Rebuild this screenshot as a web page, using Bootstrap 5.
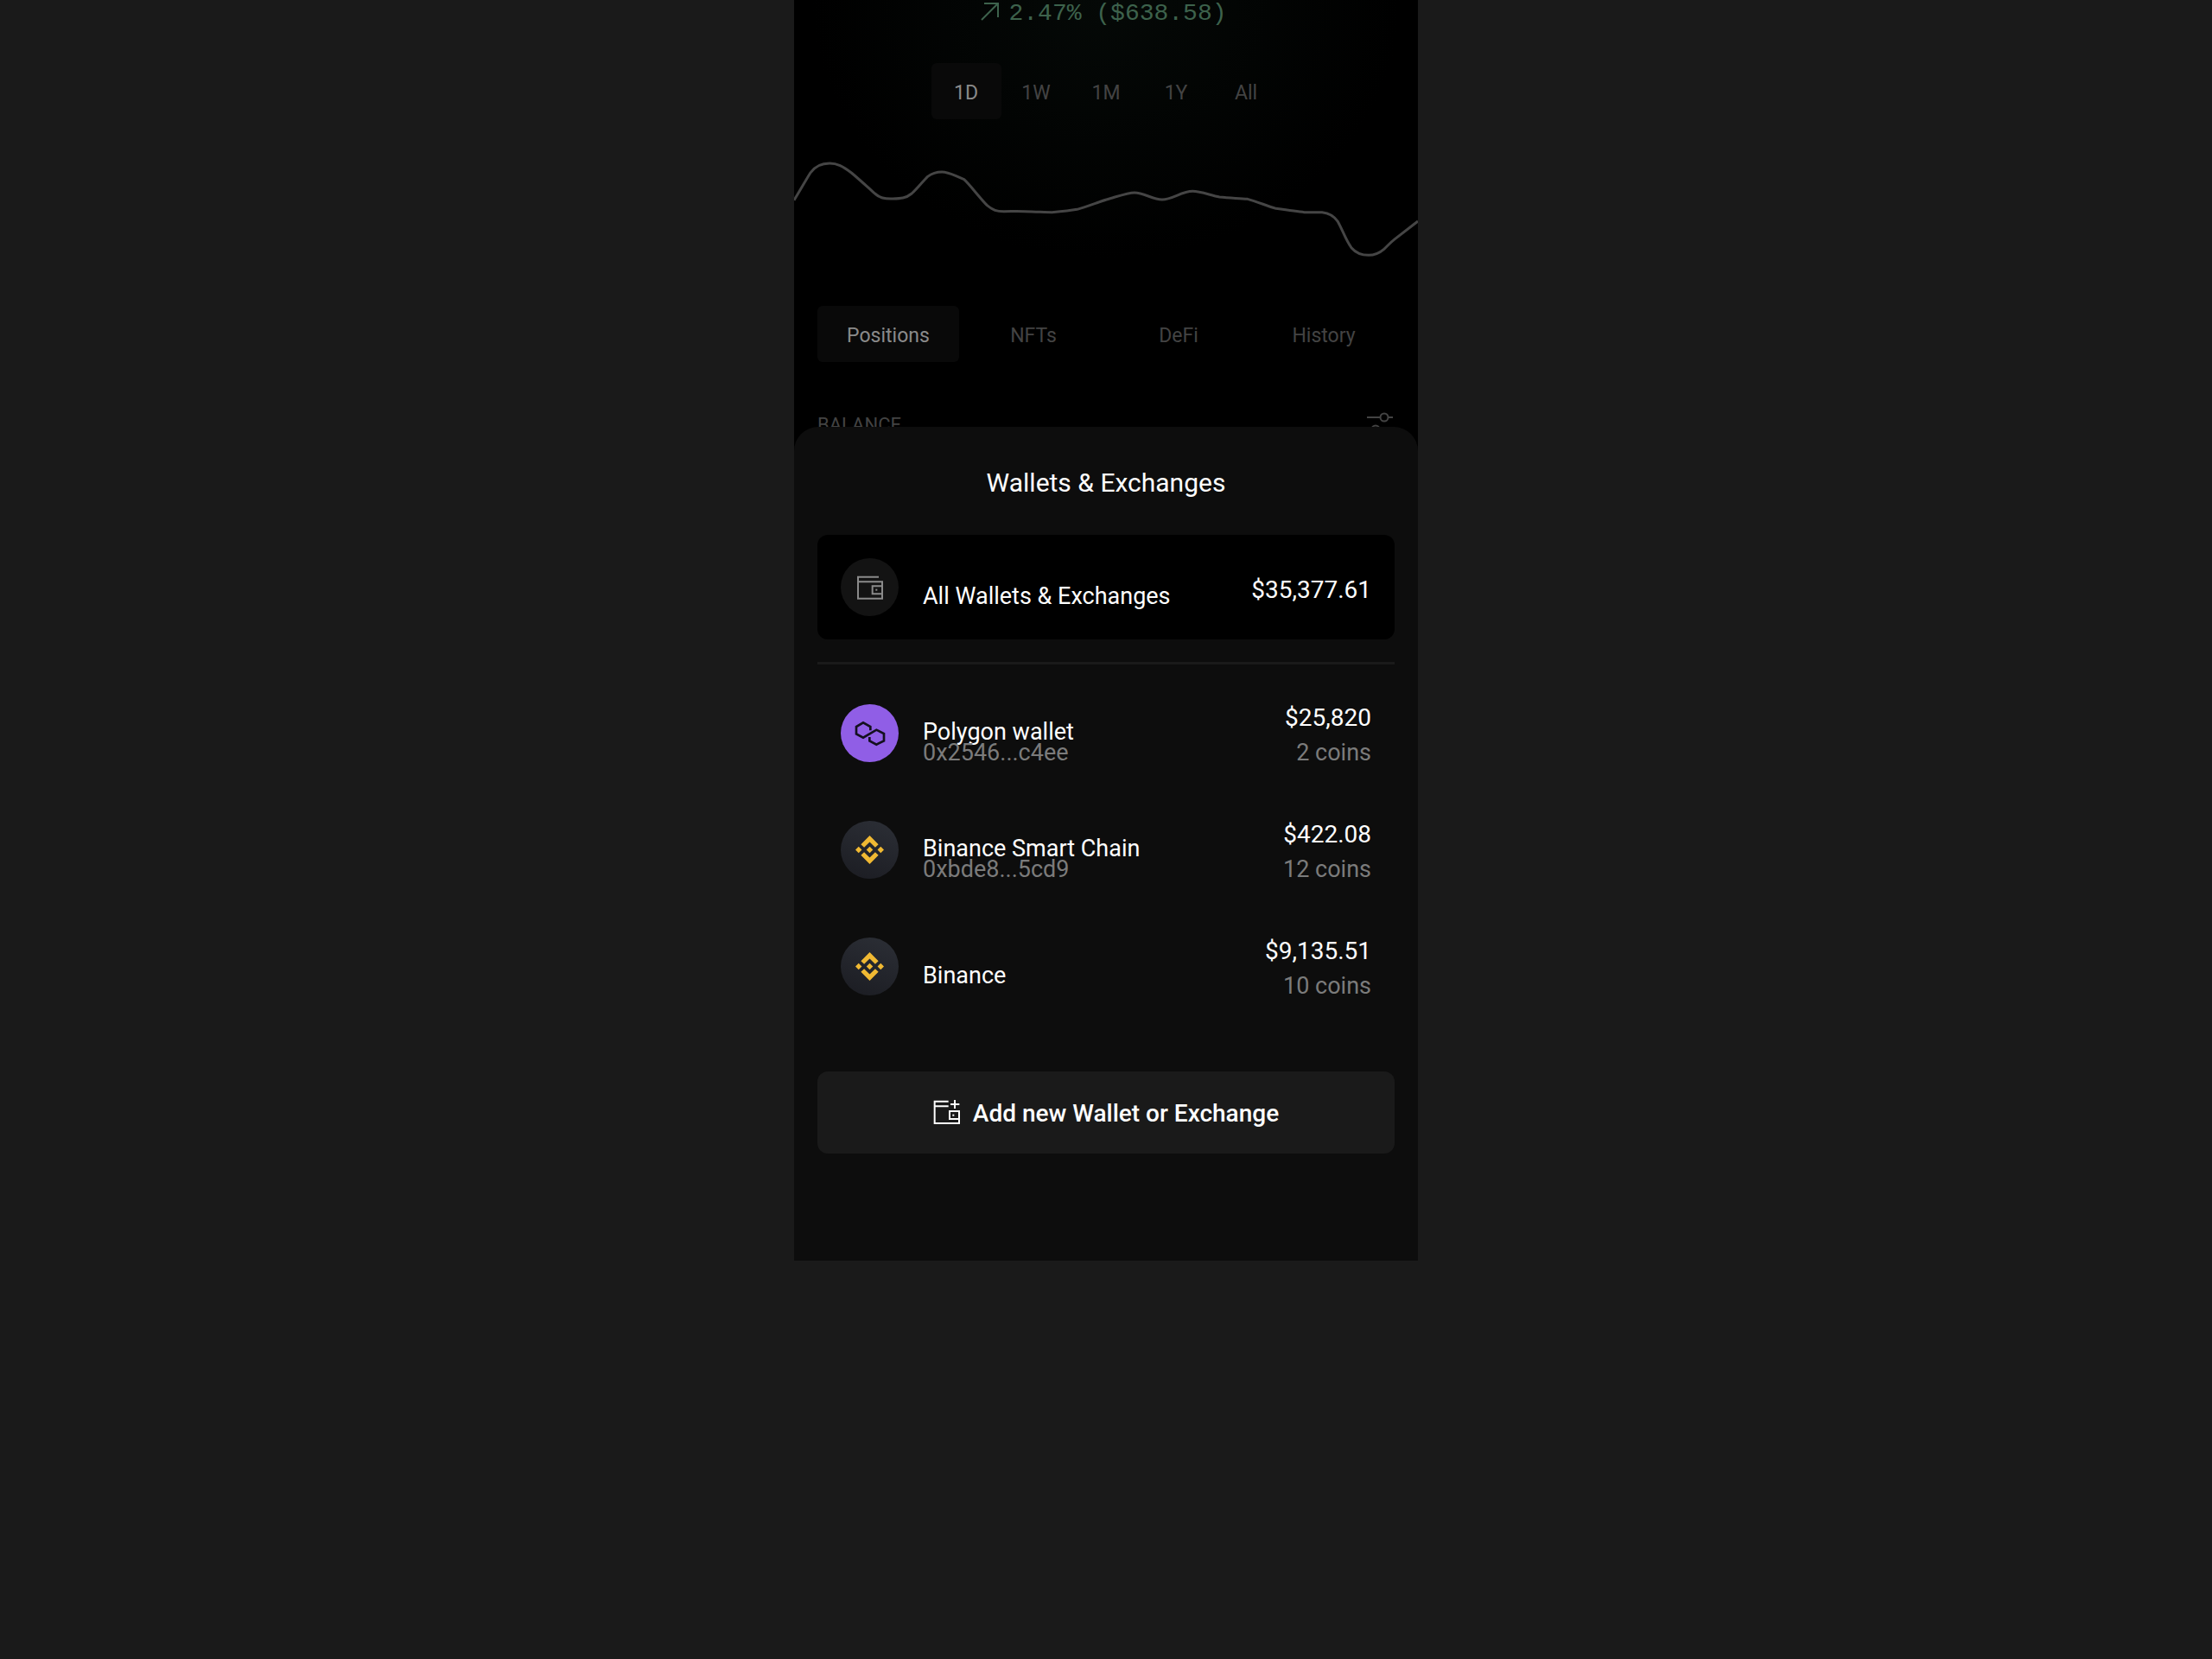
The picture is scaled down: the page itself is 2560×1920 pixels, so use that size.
<!DOCTYPE html>
<html lang="en">
<head>
<meta charset="utf-8">
<meta name="viewport" content="width=device-width, initial-scale=1">
<title>Wallets &amp; Exchanges</title>
<link href="https://cdn.jsdelivr.net/npm/bootstrap@5.3.0/dist/css/bootstrap.min.css" rel="stylesheet">
<style>
  body { background: #1a1a1a; color: #fff; font-family: Roboto, "Liberation Sans", sans-serif; font-size: 27px; }
  .phone { max-width: 722px; background: #000; }
  .dashboard { background: radial-gradient(ellipse 340px 300px at 50% 0, #050907, #000); }
  .px-side { padding-left: 27px; padding-right: 27px; }
  .change { font-family: "Liberation Mono", monospace; font-size: 28px; line-height: 32px; color: #3d624c; gap: 10px; padding-right: 6px; margin-bottom: 41px; }
  .pill { height: 65px; padding: 5px 0 0; border: 0; border-radius: 6px; font-size: 23px; line-height: 60px; text-align: center; color: #434343; background: transparent; }
  .pill:hover, .pill:focus { color: #8a8a8a; }
  .pill.active { background: #090909; color: #8a8a8a; }
  .periods .pill { width: 81px; }
  .chart { height: 160px; margin-top: 22px; margin-bottom: 34px; }
  .tabs { gap: 4px; }
  .section-head { margin-top: 55px; height: 36px; font-size: 22px; line-height: 36px; color: #434343; }
  .sheet { position: relative; margin-top: -16px; padding-top: 47px; padding-bottom: 124px; background: #0d0d0d; border-radius: 28px 28px 0 0; }
  .sheet-title { font-size: 30px; line-height: 36px; font-weight: 400; margin-bottom: 42px; }
  .wallet { min-height: 135px; gap: 28px; padding: 0 27px; color: #fff; text-decoration: none; }
  .wallet:hover { color: #fff; }
  .wallet-all { min-height: 121px; background: #000; border-radius: 12px; }
  .coin { width: 67px; height: 67px; background: #131313; color: #8a8a8a; }
  .coin-polygon { background: #905ee6; color: #14101f; }
  .coin-bnb { background: linear-gradient(200deg, #2c2f36, #1b1c22); color: #f0b933; }
  .who { padding-top: 20px; line-height: 24px; }
  .worth { padding-top: 5px; line-height: 41px; }
  .amount { font-size: 28px; }
  .dim { color: #7b7b7b; }
  .rule { height: 3px; margin: 26px 0 12px; border: 0; background: #1a1a1a; opacity: 1; }
  .add { height: 95px; margin-top: 54px; padding: 2px 0 0; gap: 15px; border: 0; border-radius: 12px; background: #1a1a1a; color: #fff; font-size: 28px; font-weight: 500; }
  .add svg { margin-bottom: 4px; }
  .add:hover { background: #222; color: #fff; }
</style>
</head>
<body>
<main class="phone w-100 mx-auto overflow-hidden">
  <section class="dashboard">
    <div class="change d-flex justify-content-center">
      <svg width="23" height="24" viewBox="0 0 23 24" fill="none" stroke="currentColor" stroke-width="2" aria-hidden="true"><path d="M2 23 21 4M5 4h16v16"/></svg>
      <span>2.47% ($638.58)</span>
    </div>
    <div class="periods d-flex justify-content-center" role="group" aria-label="Period">
      <button type="button" class="pill active">1D</button>
      <button type="button" class="pill">1W</button>
      <button type="button" class="pill">1M</button>
      <button type="button" class="pill">1Y</button>
      <button type="button" class="pill">All</button>
    </div>
    <svg class="chart d-block w-100" viewBox="39 0 1490 480" preserveAspectRatio="none" fill="none" stroke="#454545" stroke-width="3" role="img" aria-label="Balance over one day">
      <path vector-effect="non-scaling-stroke" d="M39 215C52 185 65 150 78 120C90 95 105 87 124 87C142 87 155 97 176 120C195 143 215 170 232 192C245 208 255 210 270 210C290 209 305 210 320 192C335 172 348 147 358 133C370 120 380 117 392 117C408 117 415 125 445 143C460 163 480 203 500 233C515 250 522 254 540 254C560 254 570 253 590 254C620 255 640 257 655 257C680 254 700 251 715 247C740 237 765 222 785 213C810 203 835 189 852 189C875 189 895 213 918 213C942 213 965 184 991 184C1010 184 1035 199 1055 204C1080 208 1100 208 1122 211C1145 220 1170 236 1190 244C1215 249 1240 254 1258 257L1300 257C1318 260 1330 272 1338 290C1348 315 1356 352 1370 380C1382 400 1395 406 1411 406C1430 406 1440 395 1448 385C1458 372 1460 366 1474 350L1529 288"/>
    </svg>
    <div class="px-side">
      <nav class="tabs nav nav-fill flex-nowrap" aria-label="Portfolio">
        <a href="#" class="pill nav-link active w-100" aria-current="page">Positions</a>
        <a href="#" class="pill nav-link w-100">NFTs</a>
        <a href="#" class="pill nav-link w-100">DeFi</a>
        <a href="#" class="pill nav-link w-100">History</a>
      </nav>
      <div class="section-head d-flex justify-content-between">
        <span>BALANCE</span>
        <svg width="36" height="36" viewBox="0 0 36 36" fill="none" stroke="currentColor" stroke-width="2" aria-hidden="true"><path d="M4 9h16M28 9h6M4 23h5M19 23h15"/><circle cx="24" cy="9" r="4.5"/><circle cx="14" cy="23" r="4.5"/></svg>
      </div>
    </div>
  </section>

  <section class="sheet px-side" aria-labelledby="sheet-title">
    <h1 class="sheet-title text-center" id="sheet-title">Wallets &amp; Exchanges</h1>

    <a href="#" class="wallet wallet-all d-flex align-items-center">
      <span class="coin rounded-circle d-flex align-items-center justify-content-center flex-shrink-0">
        <svg width="30" height="28" viewBox="0 0 90 84" fill="none" stroke="currentColor" stroke-width="6" aria-hidden="true"><path d="M75 5H3V80H87V22H3M87 37H53V64H87"/><rect x="64" y="47" width="6" height="6" fill="currentColor" stroke="none"/></svg>
      </span>
      <span class="who flex-grow-1">All Wallets &amp; Exchanges</span>
      <span class="worth amount text-end">$35,377.61</span>
    </a>

    <hr class="rule">

    <div class="d-flex flex-column">
      <a href="#" class="wallet d-flex align-items-center">
        <span class="coin coin-polygon rounded-circle d-flex align-items-center justify-content-center flex-shrink-0">
          <svg width="36" height="30" viewBox="86 100 108 90" fill="none" stroke="currentColor" stroke-width="8" aria-hidden="true"><path d="M141 134V121L116 107 92 121V146L116 159 162 132 188 145V170L162 183 138 170V157"/></svg>
        </span>
        <span class="who flex-grow-1 d-flex flex-column"><span>Polygon wallet</span><span class="dim">0x2546...c4ee</span></span>
        <span class="worth text-end d-flex flex-column"><span class="amount">$25,820</span><span class="dim">2 coins</span></span>
      </a>
      <a href="#" class="wallet d-flex align-items-center">
        <span class="coin coin-bnb rounded-circle d-flex align-items-center justify-content-center flex-shrink-0">
          <svg width="33" height="33" viewBox="0 0 126.6 126.6" fill="currentColor" aria-hidden="true"><path d="M38.7 53.2 63.3 28.6 87.9 53.2 102.2 38.9 63.3 0 24.4 38.9ZM0 63.3 14.3 49 28.6 63.3 14.3 77.6ZM38.7 73.4 63.3 98 87.9 73.4 102.2 87.7 63.3 126.6 24.4 87.7ZM98 63.3 112.3 49 126.6 63.3 112.3 77.6ZM77.8 63.3 63.3 48.8 48.8 63.3 63.3 77.8Z"/></svg>
        </span>
        <span class="who flex-grow-1 d-flex flex-column"><span>Binance Smart Chain</span><span class="dim">0xbde8...5cd9</span></span>
        <span class="worth text-end d-flex flex-column"><span class="amount">$422.08</span><span class="dim">12 coins</span></span>
      </a>
      <a href="#" class="wallet d-flex align-items-center">
        <span class="coin coin-bnb rounded-circle d-flex align-items-center justify-content-center flex-shrink-0">
          <svg width="33" height="33" viewBox="0 0 126.6 126.6" fill="currentColor" aria-hidden="true"><path d="M38.7 53.2 63.3 28.6 87.9 53.2 102.2 38.9 63.3 0 24.4 38.9ZM0 63.3 14.3 49 28.6 63.3 14.3 77.6ZM38.7 73.4 63.3 98 87.9 73.4 102.2 87.7 63.3 126.6 24.4 87.7ZM98 63.3 112.3 49 126.6 63.3 112.3 77.6ZM77.8 63.3 63.3 48.8 48.8 63.3 63.3 77.8Z"/></svg>
        </span>
        <span class="who flex-grow-1">Binance</span>
        <span class="worth text-end d-flex flex-column"><span class="amount">$9,135.51</span><span class="dim">10 coins</span></span>
      </a>
    </div>

    <button type="button" class="add btn w-100 d-flex align-items-center justify-content-center">
      <svg width="31" height="29" viewBox="0 0 93 87" fill="none" stroke="currentColor" stroke-width="6" aria-hidden="true"><path d="M53 8H5V84H90V42H57V69H90M5 25H53M75 3V33M60 18H91"/><rect x="67" y="53" width="6" height="6" fill="currentColor" stroke="none"/></svg>
      <span>Add new Wallet or Exchange</span>
    </button>
  </section>
</main>
<script src="https://cdn.jsdelivr.net/npm/bootstrap@5.3.0/dist/js/bootstrap.bundle.min.js"></script>
</body>
</html>
